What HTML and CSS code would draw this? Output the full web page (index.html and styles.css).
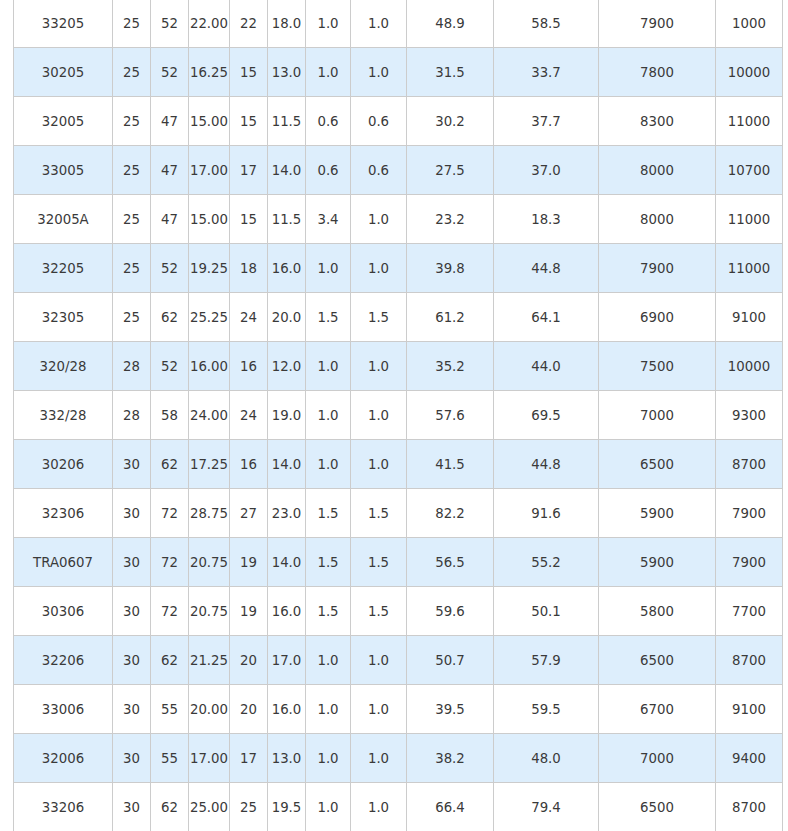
FILE: index.html
```html
<!DOCTYPE html>
<html>
<head>
<meta charset="utf-8">
<link rel="stylesheet" href="styles.css">
</head>
<body>
<div class="wrap">
<table class="spec">
<colgroup>
<col class="c1"><col class="c2"><col class="c3"><col class="c4"><col class="c5"><col class="c6"><col class="c7"><col class="c8"><col class="c9"><col class="c10"><col class="c11"><col class="c12">
</colgroup>
<tbody>
<tr><td>33205</td><td>25</td><td>52</td><td>22.00</td><td>22</td><td>18.0</td><td>1.0</td><td>1.0</td><td>48.9</td><td>58.5</td><td>7900</td><td>1000</td></tr>
<tr><td>30205</td><td>25</td><td>52</td><td>16.25</td><td>15</td><td>13.0</td><td>1.0</td><td>1.0</td><td>31.5</td><td>33.7</td><td>7800</td><td>10000</td></tr>
<tr><td>32005</td><td>25</td><td>47</td><td>15.00</td><td>15</td><td>11.5</td><td>0.6</td><td>0.6</td><td>30.2</td><td>37.7</td><td>8300</td><td>11000</td></tr>
<tr><td>33005</td><td>25</td><td>47</td><td>17.00</td><td>17</td><td>14.0</td><td>0.6</td><td>0.6</td><td>27.5</td><td>37.0</td><td>8000</td><td>10700</td></tr>
<tr><td>32005A</td><td>25</td><td>47</td><td>15.00</td><td>15</td><td>11.5</td><td>3.4</td><td>1.0</td><td>23.2</td><td>18.3</td><td>8000</td><td>11000</td></tr>
<tr><td>32205</td><td>25</td><td>52</td><td>19.25</td><td>18</td><td>16.0</td><td>1.0</td><td>1.0</td><td>39.8</td><td>44.8</td><td>7900</td><td>11000</td></tr>
<tr><td>32305</td><td>25</td><td>62</td><td>25.25</td><td>24</td><td>20.0</td><td>1.5</td><td>1.5</td><td>61.2</td><td>64.1</td><td>6900</td><td>9100</td></tr>
<tr><td>320/28</td><td>28</td><td>52</td><td>16.00</td><td>16</td><td>12.0</td><td>1.0</td><td>1.0</td><td>35.2</td><td>44.0</td><td>7500</td><td>10000</td></tr>
<tr><td>332/28</td><td>28</td><td>58</td><td>24.00</td><td>24</td><td>19.0</td><td>1.0</td><td>1.0</td><td>57.6</td><td>69.5</td><td>7000</td><td>9300</td></tr>
<tr><td>30206</td><td>30</td><td>62</td><td>17.25</td><td>16</td><td>14.0</td><td>1.0</td><td>1.0</td><td>41.5</td><td>44.8</td><td>6500</td><td>8700</td></tr>
<tr><td>32306</td><td>30</td><td>72</td><td>28.75</td><td>27</td><td>23.0</td><td>1.5</td><td>1.5</td><td>82.2</td><td>91.6</td><td>5900</td><td>7900</td></tr>
<tr><td>TRA0607</td><td>30</td><td>72</td><td>20.75</td><td>19</td><td>14.0</td><td>1.5</td><td>1.5</td><td>56.5</td><td>55.2</td><td>5900</td><td>7900</td></tr>
<tr><td>30306</td><td>30</td><td>72</td><td>20.75</td><td>19</td><td>16.0</td><td>1.5</td><td>1.5</td><td>59.6</td><td>50.1</td><td>5800</td><td>7700</td></tr>
<tr><td>32206</td><td>30</td><td>62</td><td>21.25</td><td>20</td><td>17.0</td><td>1.0</td><td>1.0</td><td>50.7</td><td>57.9</td><td>6500</td><td>8700</td></tr>
<tr><td>33006</td><td>30</td><td>55</td><td>20.00</td><td>20</td><td>16.0</td><td>1.0</td><td>1.0</td><td>39.5</td><td>59.5</td><td>6700</td><td>9100</td></tr>
<tr><td>32006</td><td>30</td><td>55</td><td>17.00</td><td>17</td><td>13.0</td><td>1.0</td><td>1.0</td><td>38.2</td><td>48.0</td><td>7000</td><td>9400</td></tr>
<tr><td>33206</td><td>30</td><td>62</td><td>25.00</td><td>25</td><td>19.5</td><td>1.0</td><td>1.0</td><td>66.4</td><td>79.4</td><td>6500</td><td>8700</td></tr>
</tbody>
</table>
</div>
</body>
</html>
```
FILE: styles.css
```css
html, body {
  margin: 0;
  padding: 0;
  background: #fff;
}
.wrap {
  padding-left: 13px;
  margin-top: -2px;
}
.spec {
  border-collapse: collapse;
  table-layout: fixed;
  width: 769px;
  font-family: "DejaVu Sans", Verdana, sans-serif;
  font-size: 13.3px;
  color: #3a3a3a;
}
.spec td {
  border: 1px solid #ccc;
  height: 49px;
  padding: 0;
  text-align: center;
  vertical-align: middle;
  white-space: nowrap;
  box-sizing: border-box;
}
.spec tr:nth-child(even) td {
  background: #ddeefc;
}
.c1 { width: 99px; }
.c2 { width: 38px; }
.c3 { width: 38px; }
.c4 { width: 41px; }
.c5 { width: 38px; }
.c6 { width: 38px; }
.c7 { width: 45px; }
.c8 { width: 56px; }
.c9 { width: 87px; }
.c10 { width: 105px; }
.c11 { width: 117px; }
.c12 { width: 67px; }
```
